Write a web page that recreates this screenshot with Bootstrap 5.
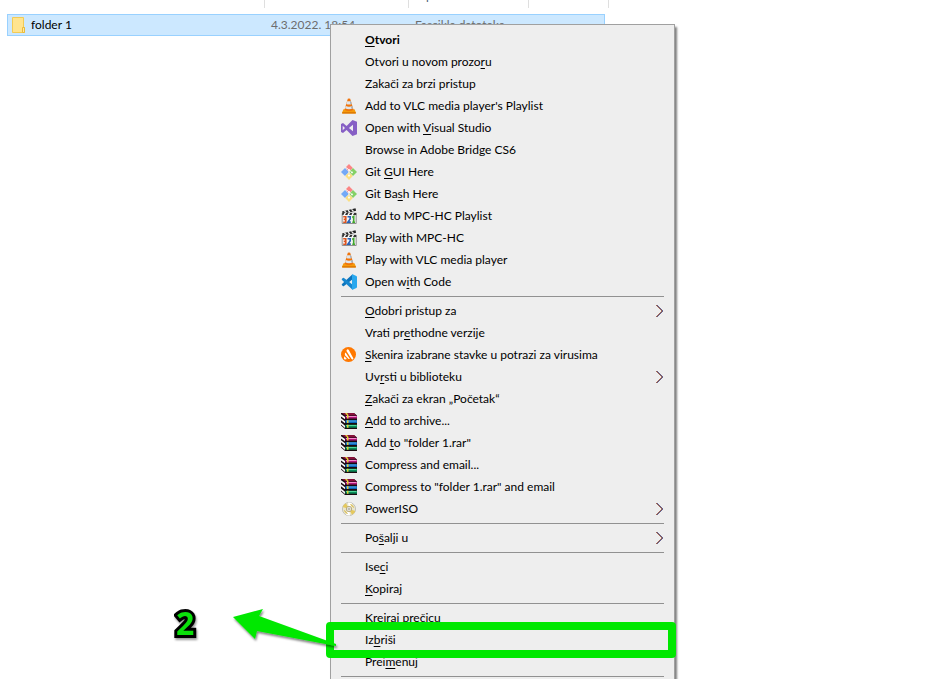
<!DOCTYPE html>
<html lang="sr-Latn">
<head>
<meta charset="utf-8">
<meta name="viewport" content="width=device-width, initial-scale=1">
<title>folder 1</title>
<link href="https://cdn.jsdelivr.net/npm/bootstrap@5.3.0/dist/css/bootstrap.min.css" rel="stylesheet">
<style>
body { font-family: Lato, "Open Sans", sans-serif; font-size: 12px; line-height: 16px; color: #000; background: #fff; }
.files { table-layout: fixed; max-width: 598px; margin-left: 7px; }
.files th { height: 14px; }
.files .col-name { width: 258px; }
.files .col-date { width: 144px; }
.files .col-type { width: 120px; }
.files .head { height: 8px; border-right: 1px solid #dfdfdf; color: #4c607a; padding-left: 7px; }
.files .head-last { margin-right: -4px; }
.files tbody tr { height: 22px; background: #cce8ff; outline: 1px solid #99d1ff; outline-offset: -1px; }
.files tbody td { color: #6d6d6d; padding-left: 6px; }
.files tbody .file-name { color: #000; padding-left: 4px; }
.ctx { top: 24px; left: 330px; width: 345px; padding: 4px 0; border: 1px solid #a0a0a0; background: #eee; color: #000; font-size: 12px; box-shadow: 2px 3px 2px rgba(0,0,0,.5); }
.ctx .dropdown-item { height: 22px; padding: 0 10px; gap: 8px; color: #000; }
.ctx .dropdown-divider { margin: 3px 10px; border-top: 1px solid #919191; opacity: 1; }
.ctx u { text-underline-offset: 2px; text-decoration-thickness: 1px; text-decoration-skip-ink: none; }
.ico { width: 16px; height: 16px; flex: none; }
.chev { width: 10px; height: 14px; flex: none; }
.hilite { inset: -7px -2px -7px -5px; border: 8px solid #00e800; border-radius: 4px; pointer-events: none; z-index: 2; }
.step-arrow { left: 226px; top: 600px; width: 120px; height: 50px; z-index: 1010; }
.step-no { left: 176px; top: 603px; font: 700 32px/40px "Open Sans", sans-serif; color: #0be00b; -webkit-text-stroke: 6px #000; paint-order: stroke fill; filter: drop-shadow(1px 2px 1px rgba(0,0,0,.4)); z-index: 1010; }
</style>
<script src="https://cdn.jsdelivr.net/npm/bootstrap@5.3.0/dist/js/bootstrap.bundle.min.js"></script>
</head>
<body>
<svg class="d-none" aria-hidden="true">
  <symbol id="i-vlc" viewBox="0 0 16 16">
    <path d="M2.500 11.200h11l1.500 3.500q.2.800-.7.800H1.700q-.9 0-.7-.8z" fill="#f59a0a"/>
    <path d="M1.200 14.300h13.600v1.200H1.200z" fill="#d66f00"/>
    <path d="M6.800.8q1.200-.8 2.400 0l3.300 11q-4.500 2.400-9 0z" fill="#f0730a"/>
    <path d="M6.100 3.300h3.800l.8 2.700q-2.700 1-5.400 0zM4.700 8.100q3.300 1.200 6.600 0l.7 2.200q-4 1.800-8 0z" fill="#dfe5ea"/>
    <path d="M9 3.300h.9l.8 2.700-1.200.3zM10 8.400l1.300-.3.700 2.200-1.400.5z" fill="#9ba8b4"/>
  </symbol>
  <symbol id="i-vs" viewBox="0 0 16 16">
    <path fill="#865fc5" fill-rule="evenodd" d="M11.500 0 16 1.800v12.400L11.500 16 5.600 10 2 12.900 0 12V4l2-.9L5.600 6zM12 4.700 7.900 8l4.100 3.300zM1.700 5.700v4.600L4 8z"/>
  </symbol>
  <symbol id="i-git" viewBox="0 0 16 16">
    <path d="M8 0 11.800 3.900 8 7.600 6.600 6.200 5 3.100z" fill="#fb8585"/>
    <path d="M4 4 7.900 7.900 4 12 0 8z" fill="#74a9f7"/>
    <path d="M12 4 16 8 12 12 8.100 8z" fill="#84d166"/>
    <path d="M8 8.300 11.800 12.100 8 16 4.200 12.100z" fill="#fbdf82"/>
    <path d="M5.500 3.500 8 6v6M8 6l3 2.400" fill="none" stroke="#f4f4f4" stroke-width=".8"/>
    <circle cx="8" cy="6" r=".9" fill="#fff"/><circle cx="11" cy="8.400" r=".9" fill="#fff"/><circle cx="8" cy="11.700" r=".9" fill="#fff"/>
  </symbol>
  <symbol id="i-mpc" viewBox="0 0 16 16">
    <path d="M1 3.500 14.500.3l.6 2.500L1.800 6z" fill="#222"/>
    <path d="m3.500 3 2 2M7 2.200l2 2M10.500 1.400l2 2" stroke="#f5f5f5" stroke-width="1.300"/>
    <path d="M1.200 5.200h14V15.500h-14z" fill="#f4f4f4" stroke="#777" stroke-width=".8"/>
    <path d="M1.200 5h14v2h-14z" fill="#333"/>
    <path d="m3 7 1.500-2M7 7l1.500-2M11 7l1.500-2" stroke="#fff" stroke-width="1.300"/>
    <path d="M2.200 8.700h2.600v5.500H2.200M2.700 11.400h2" fill="none" stroke="#dd541f" stroke-width="1.600"/>
    <path d="M6.500 8.700h2.700v2.400L6.900 14.100h2.900" fill="none" stroke="#2861b5" stroke-width="1.600"/>
    <path d="m11.200 9.500 1.500-1v6M11.300 14.200H14" fill="none" stroke="#42a72e" stroke-width="1.600"/>
  </symbol>
  <symbol id="i-code" viewBox="0 0 16 16">
    <path d="M11.500.2 1 9.900q-.6.700 0 1.300l.9.800q.5.400 1.100 0L12 5z" fill="#0d74bc"/>
    <path d="M1 4.800q-.6.700 0 1.300l10.500 9.700.5-4.800L3 4q-.6-.4-1.100 0z" fill="#1686ce"/>
    <path d="M11.500.2 15.400 2q.6.300.6 1v10q0 .7-.6 1l-3.900 1.800q-.7.200-.5-.7V.9q0-.8.500-.7z" fill="#29a8ee"/>
  </symbol>
  <symbol id="i-avast" viewBox="0 0 16 16">
    <circle cx="7.500" cy="7.500" r="7.500" fill="#ff7800"/>
    <path d="M6.100 2.500q1-.7 1.700.4l4.500 8.300q.4 1.100-.6 1.400-.9.100-1.300-.8L5.600 4.300Q5.200 3.200 6.100 2.500z" fill="#fff"/>
    <path d="M4.600 5.600 8.900 12q-1 .3-1.800-.5L3.900 8.200Q3.500 6.400 4.600 5.600zM3.400 9.300l2.500 2.800-1.700.4q-1.300 0-1.300-1.300z" fill="#fff"/>
  </symbol>
  <symbol id="i-rar" viewBox="0 0 16 16">
    <path d="M0 0h13l3 2.500V16H4L0 12.500z" fill="#1a0a10"/>
    <path d="M0 1.300 4 4v2.200L0 3.400zM0 5.300l4 3v2L0 7.200zM0 9.600l4 3.200v2.300L0 11.600z" fill="#fafafa"/>
    <path d="M.8 0h12l2.700 2.300H4z" fill="#86103a"/>
    <path d="M4.500 2.800H16v2.700H4.500z" fill="#b01478"/><path d="M5 3h10.500v1H5z" fill="#f48ccc"/>
    <path d="M4.500 7.200H16V10H4.500z" fill="#0a63b8"/><path d="M5 7.500h10.500v1H5z" fill="#55b4f4"/>
    <path d="M4.500 11.700H16v3H4.500z" fill="#0a8a58"/><path d="M5 12h10.500v1H5z" fill="#4fd89a"/>
    <path d="M4 0h2l1.500 2v3.500H6V2.300zM6 7.200h1.500V10H6zM6 11.700h1.500v3H6z" fill="#e4cf35"/>
  </symbol>
  <symbol id="i-iso" viewBox="0 0 16 16">
    <circle cx="8" cy="8" r="6.600" fill="#e9e5ce" stroke="#b8b8b0" stroke-width=".8"/>
    <path d="M8 8 1.700 6A6.600 6.600 0 0 1 5 2.200zM8 8l6.300 2a6.600 6.600 0 0 1-3.300 3.800z" fill="#e6c95c"/>
    <path d="M8 8 7 1.600a6.600 6.600 0 0 1 4 .6zM8 8l1 6.400a6.600 6.600 0 0 1-4-.6z" fill="#fff"/>
    <path d="M3.500 9.500q.8 2.200 3 3M12.500 6.500q-.8-2.200-3-3" fill="none" stroke="#d8b22c"/>
    <circle cx="8" cy="8" r="2.700" fill="#eee" stroke="#ae9e62" stroke-width=".8"/>
    <circle cx="8" cy="8" r="1" fill="#fff" stroke="#92917f" stroke-width=".7"/>
  </symbol>
  <symbol id="i-chev" viewBox="0 0 10 14">
    <path d="M2 1 8 7 2 13" fill="none" stroke="#f0ae6b"/>
    <path d="M3 1 9 7 3 13" fill="none" stroke="#6fa6e8"/>
    <path d="m2.500 1 6 6-6 6" fill="none" stroke="#541c35"/>
  </symbol>
</svg>

<main class="position-relative vh-100 overflow-hidden">
  <table class="files w-100">
    <thead>
      <tr>
        <th class="col-name p-0 align-top fw-normal"><div class="head"></div></th>
        <th class="col-date p-0 align-top fw-normal"><div class="head"></div></th>
        <th class="col-type p-0 align-top fw-normal"><div class="head overflow-hidden d-flex align-items-end"><span class="pb-1">Tip</span></div></th>
        <th class="p-0 align-top fw-normal"><div class="head head-last"></div></th>
      </tr>
    </thead>
    <tbody>
      <tr>
        <td class="file-name py-0"><div class="d-flex align-items-center">
          <svg class="ico me-1" viewBox="0 0 16 16" aria-hidden="true"><path d="M1.500.5h11v10h1v5h-12z" fill="#ffe48f" stroke="#f2cb55"/><path d="M11.500 10.500h2v5h-2z" fill="#ffe9a2" stroke="#eabb3b"/></svg>folder 1</div></td>
        <td class="py-0">4.3.2022. 18:54</td>
        <td class="py-0">Fascikla datoteka</td>
        <td></td>
      </tr>
    </tbody>
  </table>

  <div class="dropdown-menu show rounded-0 ctx">
    <button type="button" class="dropdown-item d-flex align-items-center fw-bold"><span class="ico"></span><span><u>O</u>tvori</span></button>
    <button type="button" class="dropdown-item d-flex align-items-center"><span class="ico"></span><span>Otvori u novom prozo<u>r</u>u</span></button>
    <button type="button" class="dropdown-item d-flex align-items-center"><span class="ico"></span><span>Zakači za brzi pristup</span></button>
    <button type="button" class="dropdown-item d-flex align-items-center"><svg class="ico"><use href="#i-vlc"/></svg><span>Add to VLC media player's Playlist</span></button>
    <button type="button" class="dropdown-item d-flex align-items-center"><svg class="ico"><use href="#i-vs"/></svg><span>Open with <u>V</u>isual Studio</span></button>
    <button type="button" class="dropdown-item d-flex align-items-center"><span class="ico"></span><span>Browse in Adobe Bridge CS6</span></button>
    <button type="button" class="dropdown-item d-flex align-items-center"><svg class="ico"><use href="#i-git"/></svg><span>Git <u>G</u>UI Here</span></button>
    <button type="button" class="dropdown-item d-flex align-items-center"><svg class="ico"><use href="#i-git"/></svg><span>Git Ba<u>s</u>h Here</span></button>
    <button type="button" class="dropdown-item d-flex align-items-center"><svg class="ico"><use href="#i-mpc"/></svg><span>Add to MPC-HC Playlist</span></button>
    <button type="button" class="dropdown-item d-flex align-items-center"><svg class="ico"><use href="#i-mpc"/></svg><span>Play with MPC-HC</span></button>
    <button type="button" class="dropdown-item d-flex align-items-center"><svg class="ico"><use href="#i-vlc"/></svg><span>Play with VLC media player</span></button>
    <button type="button" class="dropdown-item d-flex align-items-center"><svg class="ico"><use href="#i-code"/></svg><span>Open w<u>i</u>th Code</span></button>
    <hr class="dropdown-divider">
    <button type="button" class="dropdown-item d-flex align-items-center"><span class="ico"></span><span><u>O</u>dobri pristup za</span><svg class="chev ms-auto"><use href="#i-chev"/></svg></button>
    <button type="button" class="dropdown-item d-flex align-items-center"><span class="ico"></span><span>Vrati pr<u>e</u>thodne verzije</span></button>
    <button type="button" class="dropdown-item d-flex align-items-center"><svg class="ico"><use href="#i-avast"/></svg><span><u>S</u>kenira izabrane stavke u potrazi za virusima</span></button>
    <button type="button" class="dropdown-item d-flex align-items-center"><span class="ico"></span><span>Uv<u>r</u>sti u biblioteku</span><svg class="chev ms-auto"><use href="#i-chev"/></svg></button>
    <button type="button" class="dropdown-item d-flex align-items-center"><span class="ico"></span><span><u>Z</u>akači za ekran „Početak“</span></button>
    <button type="button" class="dropdown-item d-flex align-items-center"><svg class="ico"><use href="#i-rar"/></svg><span><u>A</u>dd to archive...</span></button>
    <button type="button" class="dropdown-item d-flex align-items-center"><svg class="ico"><use href="#i-rar"/></svg><span>Add <u>t</u>o "folder 1.rar"</span></button>
    <button type="button" class="dropdown-item d-flex align-items-center"><svg class="ico"><use href="#i-rar"/></svg><span>Compress and email...</span></button>
    <button type="button" class="dropdown-item d-flex align-items-center"><svg class="ico"><use href="#i-rar"/></svg><span>Compress to "folder 1.rar" and email</span></button>
    <button type="button" class="dropdown-item d-flex align-items-center"><svg class="ico"><use href="#i-iso"/></svg><span>PowerISO</span><svg class="chev ms-auto"><use href="#i-chev"/></svg></button>
    <hr class="dropdown-divider">
    <button type="button" class="dropdown-item d-flex align-items-center"><span class="ico"></span><span>Po<u>š</u>alji u</span><svg class="chev ms-auto"><use href="#i-chev"/></svg></button>
    <hr class="dropdown-divider">
    <button type="button" class="dropdown-item d-flex align-items-center"><span class="ico"></span><span>Ise<u>c</u>i</span></button>
    <button type="button" class="dropdown-item d-flex align-items-center"><span class="ico"></span><span><u>K</u>opiraj</span></button>
    <hr class="dropdown-divider">
    <button type="button" class="dropdown-item d-flex align-items-center"><span class="ico"></span><span>Kreiraj prečicu</span></button>
    <button type="button" class="dropdown-item d-flex align-items-center position-relative"><span class="ico"></span><span>Iz<u>b</u>riši</span><span class="hilite position-absolute"></span></button>
    <button type="button" class="dropdown-item d-flex align-items-center"><span class="ico"></span><span>Prei<u>m</u>enuj</span></button>
    <hr class="dropdown-divider">
  </div>

  <svg class="step-arrow position-absolute pe-none" viewBox="0 0 120 50" aria-hidden="true">
    <defs><filter id="sh" x="-10%" y="-20%" width="120%" height="150%"><feDropShadow dx="1" dy="2" stdDeviation="1" flood-opacity=".5"/></filter></defs>
    <path d="M7 17 37 9l-4 7 77 28v2L31 31l-2 8z" fill="#00e800" filter="url(#sh)"/>
  </svg>
  <span class="step-no position-absolute">2</span>
</main>
</body>
</html>
